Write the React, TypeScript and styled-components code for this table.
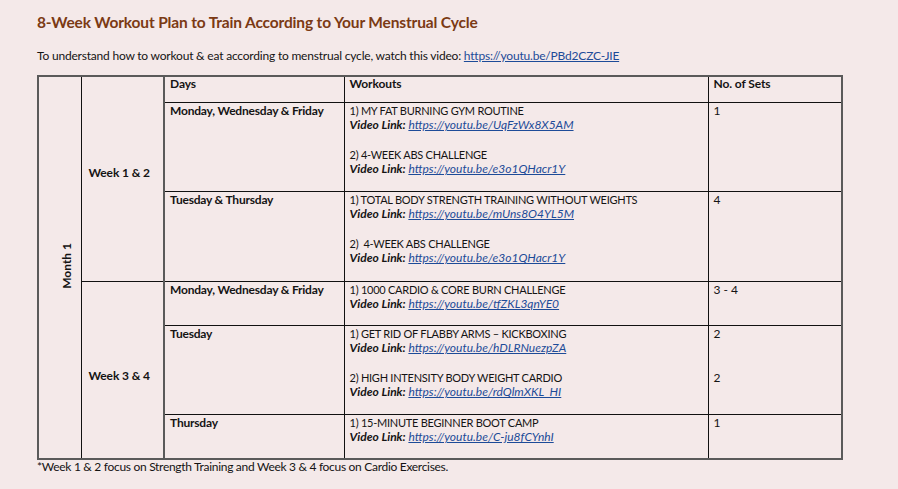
import React from 'react';
import styled, { createGlobalStyle } from 'styled-components';

const GlobalStyle = createGlobalStyle`
  html, body {
    margin: 0;
    padding: 0;
    background: #f4e9e9;
  }
  body {
    font-family: Lato, "Liberation Sans", sans-serif;
    color: #141414;
  }
`;

const Page = styled.div`
  width: 898px;
  height: 489px;
  overflow: hidden;
  box-sizing: border-box;
  padding: 12px 0 0 37px;
`;

const Title = styled.h1`
  margin: 0;
  font-size: 15.5px;
  letter-spacing: -0.15px;
  line-height: 20px;
  font-weight: 700;
  color: #7b3a14;
`;

const Intro = styled.p`
  margin: 16px 0 0;
  font-size: 12px;
  letter-spacing: -0.2px;
  line-height: 15px;
`;

const Link = styled.a`
  color: #1d4b98;
  text-decoration: underline;
`;

const VideoLink = styled(Link)`
  font-style: italic;
`;

const Table = styled.table`
  margin-top: 12px;
  width: 804px;
  table-layout: fixed;
  border-collapse: collapse;
  font-size: 12px;
  line-height: 14.7px;
  border: 2px solid #5a5a5a;
`;

const Cell = styled.td<{ $heavyLeft?: boolean }>`
  border: 1px solid #111;
  ${p => p.$heavyLeft && 'border-left: 2px solid #5a5a5a;'}
  vertical-align: top;
  padding: 1px 5px 0 5px;
  box-sizing: border-box;
`;

const HeadCell = styled(Cell)`
  padding-top: 0;
  font-weight: 700;
  letter-spacing: -0.1px;
`;

const DayCell = styled(Cell)`
  font-weight: 700;
  letter-spacing: -0.2px;
`;

const WeekCell = styled.td<{ $shift: number }>`
  border: 1px solid #111;
  vertical-align: middle;
  font-weight: 700;
  letter-spacing: -0.1px;
  padding: ${p => (p.$shift > 0 ? `${p.$shift}px 6px 0 7px` : `0 6px ${-p.$shift}px 7px`)};
`;

const MonthCell = styled.td`
  border: 1px solid #111;
  border-left: 2px solid #5a5a5a;
  vertical-align: middle;
  text-align: center;
  padding: 0 0 0 16px;
`;

const MonthLabel = styled.span`
  display: inline-block;
  writing-mode: vertical-rl;
  transform: rotate(180deg);
  font-weight: 700;
`;

const Workout = styled.div`
  & + & {
    margin-top: 14.7px;
  }
`;

const WorkoutName = styled.div`
  font-size: 11px;
  letter-spacing: -0.25px;
`;

const Label = styled.b`
  font-style: italic;
`;

const Footnote = styled.p`
  margin: 0;
  font-size: 12px;
  letter-spacing: -0.3px;
  line-height: 13px;
`;

type Item = { name: string; url: string };
type Row = { day: string; items: Item[]; sets: string[]; height: number };
type Block = { week: string; shift: number; rows: Row[] };

const blocks: Block[] = [
  {
    week: 'Week 1 & 2',
    shift: -10,
    rows: [
      {
        day: 'Monday, Wednesday & Friday',
        height: 89,
        sets: ['1'],
        items: [
          { name: '1) MY FAT BURNING GYM ROUTINE', url: 'https://youtu.be/UqFzWx8X5AM' },
          { name: '2) 4-WEEK ABS CHALLENGE', url: 'https://youtu.be/e3o1QHacr1Y' },
        ],
      },
      {
        day: 'Tuesday & Thursday',
        height: 90,
        sets: ['4'],
        items: [
          { name: '1) TOTAL BODY STRENGTH TRAINING WITHOUT WEIGHTS', url: 'https://youtu.be/mUns8O4YL5M' },
          { name: '2)\u00a0 4-WEEK ABS CHALLENGE', url: 'https://youtu.be/e3o1QHacr1Y' },
        ],
      },
    ],
  },
  {
    week: 'Week 3 & 4',
    shift: 14,
    rows: [
      {
        day: 'Monday, Wednesday & Friday',
        height: 44,
        sets: ['3 - 4'],
        items: [{ name: '1) 1000 CARDIO & CORE BURN CHALLENGE', url: 'https://youtu.be/tfZKL3qnYE0' }],
      },
      {
        day: 'Tuesday',
        height: 89,
        sets: ['2', '2'],
        items: [
          { name: '1) GET RID OF FLABBY ARMS \u2013 KICKBOXING', url: 'https://youtu.be/hDLRNuezpZA' },
          { name: '2) HIGH INTENSITY BODY WEIGHT CARDIO', url: 'https://youtu.be/rdQlmXKL_HI' },
        ],
      },
      {
        day: 'Thursday',
        height: 45,
        sets: ['1'],
        items: [{ name: '1) 15-MINUTE BEGINNER BOOT CAMP', url: 'https://youtu.be/C-ju8fCYnhI' }],
      },
    ],
  },
];

export default function App() {
  return (
    <>
      <GlobalStyle />
      <Page>
        <Title>8-Week Workout Plan to Train According to Your Menstrual Cycle</Title>
        <Intro>
          To understand how to workout &amp; eat according to menstrual cycle, watch this video:{' '}
          <Link href="#">https://youtu.be/PBd2CZC-JIE</Link>
        </Intro>
        <Table>
          <colgroup>
            <col style={{ width: 43 }} />
            <col style={{ width: 83 }} />
            <col style={{ width: 180 }} />
            <col style={{ width: 364 }} />
            <col style={{ width: 134 }} />
          </colgroup>
          <tbody>
            <tr style={{ height: 26 }}>
              <MonthCell rowSpan={7}>
                <MonthLabel>Month 1</MonthLabel>
              </MonthCell>
              <WeekCell rowSpan={3} $shift={blocks[0].shift}>
                {blocks[0].week}
              </WeekCell>
              <HeadCell $heavyLeft>Days</HeadCell>
              <HeadCell>Workouts</HeadCell>
              <HeadCell>No. of Sets</HeadCell>
            </tr>
            {blocks.map((block, bi) =>
              block.rows.map((row, ri) => (
                <tr key={`${bi}-${ri}`} style={{ height: row.height }}>
                  {bi === 1 && ri === 0 && (
                    <WeekCell rowSpan={3} $shift={block.shift}>
                      {block.week}
                    </WeekCell>
                  )}
                  <DayCell $heavyLeft>{row.day}</DayCell>
                  <Cell>
                    {row.items.map(item => (
                      <Workout key={item.name}>
                        <WorkoutName>{item.name}</WorkoutName>
                        <div>
                          <Label>Video Link: </Label>
                          <VideoLink href="#">{item.url}</VideoLink>
                        </div>
                      </Workout>
                    ))}
                  </Cell>
                  <Cell>
                    {row.sets.map((s, i) => (
                      <Workout key={i}>
                        <div>{s}</div>
                        {row.sets.length > 1 && <div>&nbsp;</div>}
                      </Workout>
                    ))}
                  </Cell>
                </tr>
              ))
            )}
          </tbody>
        </Table>
        <Footnote>
          *Week 1 &amp; 2 focus on Strength Training and Week 3 &amp; 4 focus on Cardio Exercises.
        </Footnote>
      </Page>
    </>
  );
}
